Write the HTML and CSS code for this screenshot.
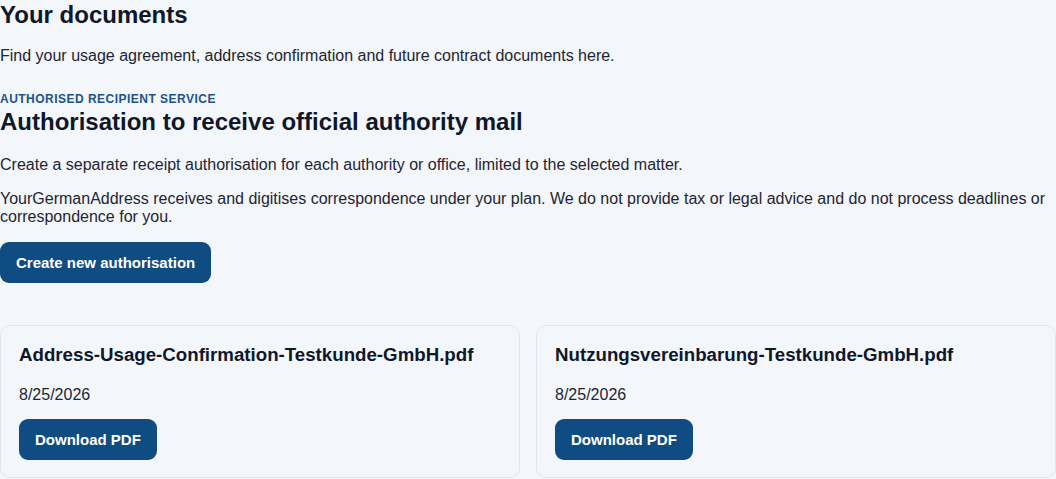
FILE: index.html
```html
<!DOCTYPE html>
<html lang="en">
<head>
<meta charset="utf-8">
<title>Your documents</title>
<link rel="stylesheet" href="styles.css">
</head>
<body>
<main class="page">
  <section class="intro">
    <h1 class="title">Your documents</h1>
    <p class="text">Find your usage agreement, address confirmation and future contract documents here.</p>
  </section>
  <section class="auth">
    <div class="eyebrow">AUTHORISED RECIPIENT SERVICE</div>
    <h2 class="title">Authorisation to receive official authority mail</h2>
    <p class="text">Create a separate receipt authorisation for each authority or office, limited to the selected matter.</p>
    <p class="text">YourGermanAddress receives and digitises correspondence under your plan. We do not provide tax or legal advice and do not process deadlines or correspondence for you.</p>
    <button class="btn btn-lg" type="button">Create new authorisation</button>
  </section>
  <section class="docs">
    <article class="card">
      <h3 class="card-title">Address-Usage-Confirmation-Testkunde-GmbH.pdf</h3>
      <p class="card-date">8/25/2026</p>
      <button class="btn" type="button">Download PDF</button>
    </article>
    <article class="card">
      <h3 class="card-title">Nutzungsvereinbarung-Testkunde-GmbH.pdf</h3>
      <p class="card-date">8/25/2026</p>
      <button class="btn" type="button">Download PDF</button>
    </article>
  </section>
</main>
</body>
</html>
```

FILE: styles.css
```css
html, body {
  margin: 0;
  padding: 0;
  background: #f3f6fb;
}
body {
  font-family: "Liberation Sans", Arial, sans-serif;
  color: #111827;
  font-size: 16px;
}
.page {
  width: 1056px;
  display: flex;
  flex-direction: column;
}
.title {
  margin: 0;
  font-size: 24px;
  font-weight: 700;
  line-height: 30px;
  color: #0f172a;
}
.text {
  margin: 0;
  font-size: 16px;
  line-height: 18px;
  color: #1e2533;
}
.intro {
  display: flex;
  flex-direction: column;
  gap: 17px;
}
.auth {
  display: flex;
  flex-direction: column;
  align-items: flex-start;
  margin-top: 27px;
}
.eyebrow {
  font-size: 12px;
  font-weight: 700;
  letter-spacing: 0.48px;
  color: #1c5389;
  line-height: 15px;
}
.auth .title {
  margin-top: 0;
}
.auth .text {
  margin-top: 19px;
}
.auth .text + .text {
  margin-top: 16px;
}
.btn {
  border: 0;
  background: #0f4c81;
  color: #ffffff;
  font-family: "Liberation Sans", Arial, sans-serif;
  font-size: 15px;
  font-weight: 700;
  border-radius: 9px;
  height: 41px;
  padding: 0 16px;
  cursor: pointer;
}
.btn-lg {
  margin-top: 16px;
}
.docs {
  display: grid;
  grid-template-columns: 1fr 1fr;
  gap: 16px;
  margin-top: 42px;
}
.card {
  border: 1px solid #e2e7ef;
  border-radius: 10px;
  padding: 18px 18px 17px;
  display: flex;
  flex-direction: column;
  align-items: flex-start;
  background: #f3f6fb;
}
.card-title {
  margin: 0;
  font-size: 18.7px;
  font-weight: 700;
  line-height: 22px;
  color: #0f172a;
}
.card-date {
  margin: 20px 0 0;
  font-size: 16px;
  line-height: 18px;
  color: #1e2533;
}
.card .btn {
  margin-top: 15px;
}
```
